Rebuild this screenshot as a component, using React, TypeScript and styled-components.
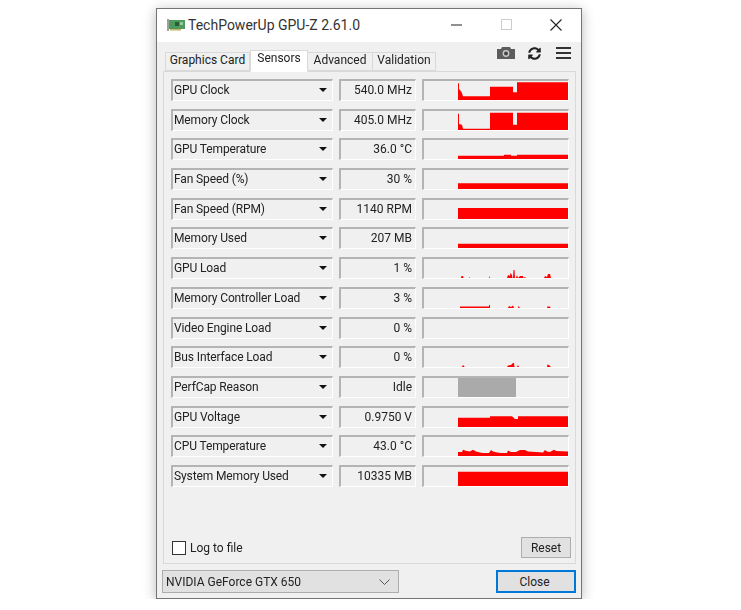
import * as React from 'react';
import styled, { createGlobalStyle } from 'styled-components';
import { FaSyncAlt } from 'react-icons/fa';

const GlobalStyle = createGlobalStyle`
    html, body {
        margin: 0;
        background: #fff;
    }
    body {
        padding: 8px 0 0 156px;
        font-family: Roboto, "Liberation Sans", sans-serif;
        font-size: 12px;
        color: #222;
    }
`

const Win = styled.div`
    width: 424px;
    height: 589px;
    border: 1px solid #747474;
    background: #f0f0f0;
    box-shadow: 0 2px 12px rgba(0, 0, 0, 0.28);
    display: flex;
    flex-direction: column;
    filter: blur(0.4px);
`

const TitleBar = styled.div`
    height: 33px;
    box-sizing: border-box;
    padding: 1px 0 3px 10px;
    background: #fff;
    display: flex;
    align-items: center;
    flex: none;
`

const Title = styled.div`
    font-size: 14px;
    margin-left: 3px;
    flex: 1;
    color: #333;
`

const WinButtons = styled.div`
    display: flex;
    gap: 4px;
    padding-right: 2px;
`

const WinButton = styled.div`
    width: 46px;
    height: 26px;
    display: flex;
    align-items: center;
    justify-content: center;
`

const TabStrip = styled.div`
    height: 29px;
    flex: none;
    display: flex;
    align-items: flex-end;
    padding: 0 7px 0 8px;
    position: relative;
`

const Tab = styled.div<{ $active?: boolean; $w: number }>`
    width: ${p => p.$w}px;
    height: ${p => (p.$active ? 22 : 19)}px;
    box-sizing: border-box;
    background: ${p => (p.$active ? '#fff' : '#f0f0f0')};
    border: 1px solid #d9d9d9;
    border-bottom: ${p => (p.$active ? '1px solid #fff' : '1px solid #d9d9d9')};
    border-left: ${p => (p.$active ? '1px solid #d9d9d9' : 'none')};
    display: flex;
    align-items: center;
    justify-content: center;
    white-space: nowrap;
    margin-bottom: ${p => (p.$active ? -1 : 0)}px;
    padding-bottom: ${p => (p.$active ? 7 : 4)}px;
    position: relative;
    z-index: ${p => (p.$active ? 1 : 0)};
    &:first-child {
        border-left: 1px solid #d9d9d9;
    }
`

const Tools = styled.div`
    margin-left: auto;
    display: flex;
    align-items: center;
    gap: 13px;
    height: 24px;
    align-self: flex-start;
    margin-top: -1px;
    margin-right: 3px;
`

const Panel = styled.div`
    flex: none;
    height: 493px;
    box-sizing: border-box;
    margin: 0 5px 0 6px;
    border: 1px solid #d9d9d9;
    padding: 7px 6px 5px 7px;
    display: flex;
    flex-direction: column;
    justify-content: space-between;
`

const Rows = styled.div`
    display: grid;
    grid-template-columns: 162px 77px 147px;
    column-gap: 6px;
    row-gap: 7.69px;
    grid-auto-rows: 22px;
`

const Sunken = styled.div`
    box-sizing: border-box;
    border-style: solid;
    border-color: #b4b4b4 #fff #fff #b4b4b4;
    border-width: 2px 1px 1px 2px;
    background: #f0f0f0;
`

const SensorName = styled(Sunken)`
    display: flex;
    align-items: center;
    justify-content: space-between;
    padding: 0 5px 1px 1px;
    white-space: nowrap;
    letter-spacing: -0.12px;
`

const Caret = styled.span`
    width: 0;
    height: 0;
    border-left: 4px solid transparent;
    border-right: 4px solid transparent;
    border-top: 4px solid #111;
`

const SensorValue = styled(Sunken)`
    display: flex;
    align-items: center;
    justify-content: flex-end;
    padding: 0 3px 1px 0;
`

const Graph = styled(Sunken)`
    display: flex;
    justify-content: flex-end;
    svg {
        display: block;
    }
`

const BottomRow = styled.div`
    display: flex;
    align-items: center;
    justify-content: space-between;
`

const LogLabel = styled.label`
    display: flex;
    align-items: center;
    gap: 4px;
    margin-left: 1px;
`

const CheckBox = styled.span`
    width: 14px;
    height: 14px;
    box-sizing: border-box;
    background: #fff;
    border: 1px solid #333;
`

const ResetButton = styled.button`
    width: 50px;
    height: 21px;
    margin-right: -2px;
    padding: 0;
    background: #e1e1e1;
    border: 1px solid #adadad;
    font: inherit;
    color: #222;
`

const Footer = styled.div`
    flex: 1;
    display: flex;
    justify-content: space-between;
    padding: 6px 5px 0 5px;
`

const GpuSelect = styled.div`
    width: 237px;
    height: 23px;
    box-sizing: border-box;
    background: #e1e1e1;
    border: 1px solid #adadad;
    display: flex;
    align-items: center;
    justify-content: space-between;
    padding: 0 8px 0 3px;
`

const CloseButton = styled.button`
    width: 80px;
    height: 23px;
    padding: 0 3px 0 0;
    background: #e1e1e1;
    border: 2px solid #0078d7;
    font: inherit;
    color: #222;
`

type Sensor = { name: string; value: string; points?: string; gray?: boolean }

const sensors: Sensor[] = [
    { name: 'GPU Clock', value: '540.0 MHz', points: '0,19 0,2.3 1,2.3 1,8 3.5,11 5,15.3 32,15.3 32,5.7 55,5.7 55,11.3 59,11.3 59,1.3 110,1.3 110,19' },
    { name: 'Memory Clock', value: '405.0 MHz', points: '0,19 0,2.7 1,2.7 1,13 4,13.7 5,17.7 32,17.7 32,1.7 55,1.7 55,13.7 59,13.7 59,1.7 110,1.7 110,19' },
    { name: 'GPU Temperature', value: '36.0 °C', points: '0,19 0,15.7 46,15.7 46,14.7 53,14.7 53,15.7 59,15.7 59,14.7 110,14.7 110,19' },
    { name: 'Fan Speed (%)', value: '30 %', points: '0,19 0,13.3 110,13.3 110,19' },
    { name: 'Fan Speed (RPM)', value: '1140 RPM', points: '0,19 0,8 110,8 110,19' },
    { name: 'Memory Used', value: '207 MB', points: '0,19 0,14.7 110,14.7 110,19' },
    { name: 'GPU Load', value: '1 %', points: '3,19 3.5,17 5,17 5.5,19 11,19 11.5,18 12,19 31,19 31.5,17 32,19 49,19 50,16 52,17 52.5,14 54,16 54.5,19 55,19 55.5,11 56.5,11 57,19 58,19 59,16 60,19 62,17 65,17 65.5,19 67,18 68,19 86,19 87,17 89,18 90,15 92,15 93,19' },
    { name: 'Memory Controller Load', value: '3 %', points: '2,19 2,17.6 31,17.6 31,16 32,16 32,19 50,19 51,17 53,18 55,16.5 56,19 60,19 60.5,17 62,19 89,19 89.5,17.5 92,17.5 92.5,19' },
    { name: 'Video Engine Load', value: '0 %' },
    { name: 'Bus Interface Load', value: '0 %', points: '4,19 4.5,17.5 6,17.5 6.5,19 49,19 50,17.5 53,17 55,15 56,15 56.5,19 59,19 60,17 61,19 89,19 89.5,16.5 91,17 93,19' },
    { name: 'PerfCap Reason', value: 'Idle', points: '0,19 0,0 58,0 58,19', gray: true },
    { name: 'GPU Voltage', value: '0.9750 V', points: '0,19 0,9.7 32,9.7 32,8.3 54,8.3 57,11 60,11 60,8.3 110,8.3 110,19' },
    { name: 'CPU Temperature', value: '43.0 °C', points: '0,19 0,15 4,15 5,12.7 7,13.5 9,14 12,14.5 15,12.7 18,14.5 22,15.5 25,16 31,16 33,13 35,14.5 39,15.5 43,16 49,16 50,13.5 53,15 58,15 60,14 62,13 67,13 70,14.5 78,15 85,15.5 87,13 89,14.5 92,15 96,12.7 98,14 110,14.5 110,19' },
    { name: 'System Memory Used', value: '10335 MB', points: '0,19 0,4.7 110,4.7 110,19' },
]

function CardIcon() {
    return (
        <svg width="18" height="14" viewBox="0 0 18 14">
            <rect x="0" y="1" width="2" height="12" fill="#9aa39a" />
            <rect x="2" y="2" width="16" height="9" fill="#4f9a5c" />
            <rect x="8" y="4" width="4" height="4" fill="#2c5c38" />
            <rect x="13" y="4" width="3" height="3" fill="#8ccf98" />
            <rect x="3" y="11" width="11" height="1.5" fill="#c2b66a" />
        </svg>
    )
}

function CameraIcon() {
    return (
        <svg width="18" height="12" viewBox="0 0 18 12">
            <path d="M0 2h4l1-2h8l1 2h4v10H0z" fill="#5c5c5c" />
            <circle cx="9" cy="6.5" r="3.4" fill="#c9c9c9" />
            <circle cx="9" cy="6.5" r="2" fill="#444" />
        </svg>
    )
}

const MenuSvg = styled.svg`
    margin-left: 2px;
`

function MenuIcon() {
    return (
        <MenuSvg width="15" height="12" viewBox="0 0 15 12">
            <path d="M0 1h15M0 6h15M0 11h15" stroke="#333" strokeWidth="2" />
        </MenuSvg>
    )
}

export default function App() {
    return (
        <>
            <GlobalStyle />
            <Win>
                <TitleBar>
                    <CardIcon />
                    <Title>TechPowerUp GPU-Z 2.61.0</Title>
                    <WinButtons>
                        <WinButton>
                            <svg width="11" height="2" viewBox="0 0 11 2"><path d="M0 1h11" stroke="#222" strokeWidth="1" /></svg>
                        </WinButton>
                        <WinButton>
                            <svg width="11" height="11" viewBox="0 0 11 11"><rect x="0.5" y="0.5" width="10" height="10" fill="none" stroke="#ccc" /></svg>
                        </WinButton>
                        <WinButton>
                            <svg width="12" height="12" viewBox="0 0 12 12"><path d="M0.5 0.5l11 11M11.5 0.5l-11 11" stroke="#222" strokeWidth="1.1" /></svg>
                        </WinButton>
                    </WinButtons>
                </TitleBar>
                <TabStrip>
                    <Tab $w={85}>Graphics Card</Tab>
                    <Tab $w={58} $active>Sensors</Tab>
                    <Tab $w={65}>Advanced</Tab>
                    <Tab $w={63}>Validation</Tab>
                    <Tools>
                        <CameraIcon />
                        <FaSyncAlt size={13} color="#222" />
                        <MenuIcon />
                    </Tools>
                </TabStrip>
                <Panel>
                    <Rows>
                        {sensors.map(s => (
                            <React.Fragment key={s.name}>
                                <SensorName>{s.name}<Caret /></SensorName>
                                <SensorValue>{s.value}</SensorValue>
                                <Graph>
                                    <svg width="110" height="19" viewBox="0 0 110 19">
                                        {s.points && <polygon points={s.points} fill={s.gray ? '#aaaaaa' : '#ff0000'} />}
                                    </svg>
                                </Graph>
                            </React.Fragment>
                        ))}
                    </Rows>
                    <BottomRow>
                        <LogLabel><CheckBox />Log to file</LogLabel>
                        <ResetButton>Reset</ResetButton>
                    </BottomRow>
                </Panel>
                <Footer>
                    <GpuSelect>
                        NVIDIA GeForce GTX 650
                        <svg width="11" height="6" viewBox="0 0 11 6"><path d="M0.5 0.5l5 5 5-5" fill="none" stroke="#555" /></svg>
                    </GpuSelect>
                    <CloseButton>Close</CloseButton>
                </Footer>
            </Win>
        </>
    )
}
